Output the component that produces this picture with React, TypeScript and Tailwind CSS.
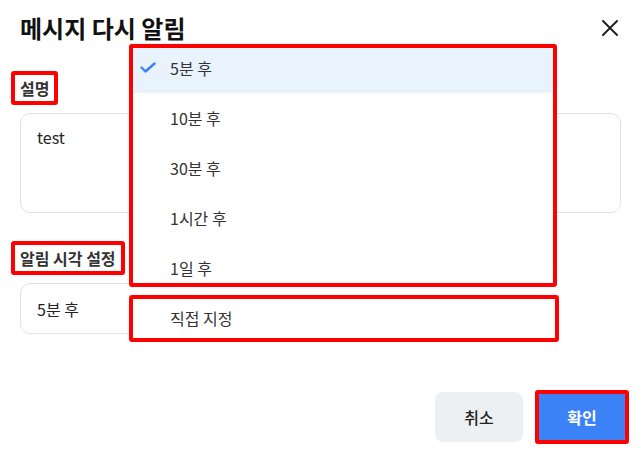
import { useState } from "react";

const OPTIONS = ["5분 후", "10분 후", "30분 후", "1시간 후", "1일 후", "직접 지정"];

function RedBox({ className }: { className: string }) {
  return (
    <span
      className={`pointer-events-none absolute rounded-[3px] border-4 border-[#f00] ${className}`}
    />
  );
}

export default function App() {
  const [selected] = useState(0);

  return (
    <div
      className="relative h-[456px] w-[641px] overflow-hidden bg-white text-[#333]"
      style={{ fontFamily: '"Noto Sans CJK KR", "Noto Sans", sans-serif' }}
    >
      <div className="px-5 pt-[12px]">
        {/* Header */}
        <div className="flex h-[32px] items-center justify-between">
          <h2 className="text-[24px] font-bold leading-[32px] text-[#111]">
            메시지 다시 알림
          </h2>
          <button className="mr-[1px] flex h-[20px] w-[20px] items-center justify-center">
            <svg width="16" height="16" viewBox="0 0 16 16" fill="none">
              <path
                d="M1 1L15 15M15 1L1 15"
                stroke="#222"
                strokeWidth="2"
                strokeLinecap="round"
              />
            </svg>
          </button>
        </div>

        {/* 설명 */}
        <div className="mt-[33px] leading-[22px]">
          <span className="relative inline-block align-top text-[16px] font-bold leading-[22px]">
            설명
            <RedBox className="-inset-x-[9px] -inset-y-[6px]" />
          </span>
        </div>
        <textarea
          readOnly
          defaultValue="test"
          className="mt-[14px] block h-[100px] w-full resize-none rounded-[10px] border border-[#e2e2e2] px-4 pt-[12px] text-[16px] leading-[22px] text-[#222] outline-none"
        />

        {/* 알림 시각 설정 */}
        <div className="mt-[34px] leading-[22px]">
          <span className="relative inline-block align-top text-[16px] font-bold leading-[22px]">
            알림 시각 설정
            <RedBox className="-inset-x-[9px] -inset-y-[6px]" />
          </span>
        </div>
        <div className="mt-[14px] flex h-[51px] w-[420px] items-center rounded-[10px] border border-[#e2e2e2] px-4 text-[16px] text-[#222]">
          5분 후
        </div>

        {/* Footer */}
        <div className="-mr-[6px] mt-[58px] flex justify-end gap-[14px]">
          <button className="h-[50px] w-[88px] rounded-lg bg-[#edf0f3] text-[16px] font-medium text-[#222]">
            취소
          </button>
          <button className="relative h-[50px] w-[90px] rounded-lg bg-[#3b82f6] text-[16px] font-bold text-white">
            확인
            <RedBox className="-inset-[2px]" />
          </button>
        </div>
      </div>

      {/* Dropdown list */}
      <div className="absolute left-[129px] top-[43px] w-[428px] bg-white">
        {OPTIONS.map((opt, i) => (
          <div
            key={opt}
            className={`flex h-[50px] items-center pl-[11px] text-[16px] text-[#333] ${
              i === selected ? "bg-[#e8f3fd]" : ""
            }`}
          >
            <span className="flex w-[16px] items-center">
              {i === selected && (
                <svg width="16" height="12" viewBox="0 0 16 12" fill="none">
                  <path
                    d="M1.5 5.5L5.5 9.5L14.5 1.5"
                    stroke="#3b82f6"
                    strokeWidth="2.4"
                    strokeLinecap="round"
                    strokeLinejoin="round"
                  />
                </svg>
              )}
            </span>
            <span className="ml-[14px]">{opt}</span>
          </div>
        ))}
        <RedBox className="left-0 top-[1px] h-[243px] w-[428px]" />
        <RedBox className="left-0 top-[252px] h-[47px] w-[430px]" />
      </div>
    </div>
  );
}
